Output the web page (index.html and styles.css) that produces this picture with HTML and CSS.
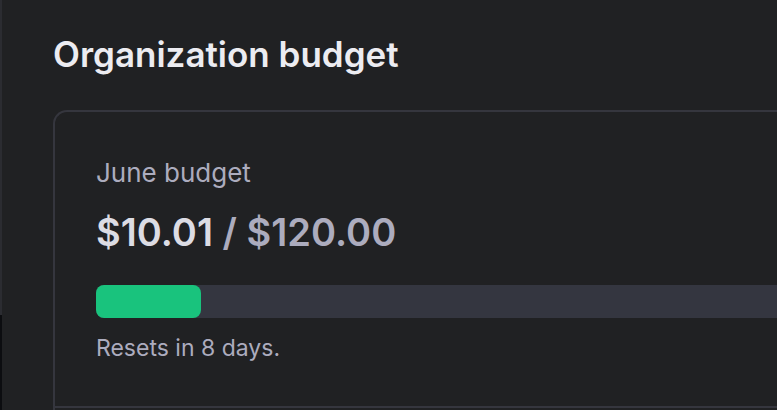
FILE: index.html
```html
<!DOCTYPE html>
<html lang="en">
<head>
<meta charset="utf-8">
<title>Organization budget</title>
<link rel="stylesheet" href="styles.css">
</head>
<body>
<div class="layout">
  <div class="edge">
    <div class="edge-top"></div>
    <div class="edge-bottom"></div>
  </div>
  <main class="main">
    <h1 class="title">Organization budget</h1>
    <section class="card">
      <div class="card-body">
        <div class="label">June budget</div>
        <div class="amount"><span class="spent">$10.01</span> <span class="limit">/ $120.00</span></div>
        <div class="track"><div class="fill" style="width:105px"></div></div>
        <div class="note">Resets in 8 days.</div>
      </div>
      <div class="divider"></div>
      <div class="card-more"></div>
    </section>
  </main>
</div>
</body>
</html>
```

FILE: styles.css
```css
html, body {
  margin: 0;
  padding: 0;
  background: #202123;
  height: 100%;
  overflow: hidden;
}
body {
  font-family: Inter, "Noto Sans", "Liberation Sans", sans-serif;
}
.layout {
  display: flex;
  height: 410px;
}
.edge {
  width: 2px;
  display: flex;
  flex-direction: column;
  flex-shrink: 0;
}
.edge-top {
  height: 315px;
  background: #2b2c31;
}
.edge-bottom {
  flex: 1;
  background: #0c0d10;
}
.main {
  flex: 1;
  padding: 34px 0 0 51px;
  min-width: 0;
  overflow: hidden;
}
.title {
  margin: 0 0 36px 0;
  font-size: 35px;
  line-height: 40px;
  font-weight: 600;
  color: #ececf1;
  white-space: nowrap;
}
.card {
  border: 2px solid #35363e;
  border-right: none;
  border-bottom: none;
  border-radius: 14px 0 0 0;
  margin-right: -20px;
}
.card-body {
  padding: 44px 0 42px 41px;
}
.label {
  font-size: 26px;
  line-height: 34px;
  color: #acacbe;
  font-weight: 400;
}
.amount {
  margin-top: 19px;
  font-size: 38px;
  line-height: 46px;
  font-weight: 600;
  white-space: nowrap;
}
.spent {
  color: #dcdce4;
}
.limit {
  color: #acacbe;
}
.track {
  margin-top: 30px;
  height: 33px;
  background: #343640;
  border-radius: 8px 0 0 8px;
}
.fill {
  height: 100%;
  background: #19c37d;
  border-radius: 8px;
}
.note {
  margin-top: 15px;
  font-size: 23px;
  line-height: 31px;
  color: #acacbe;
}
.divider {
  height: 2px;
  background: #35363e;
}
.card-more {
  height: 40px;
}
```
